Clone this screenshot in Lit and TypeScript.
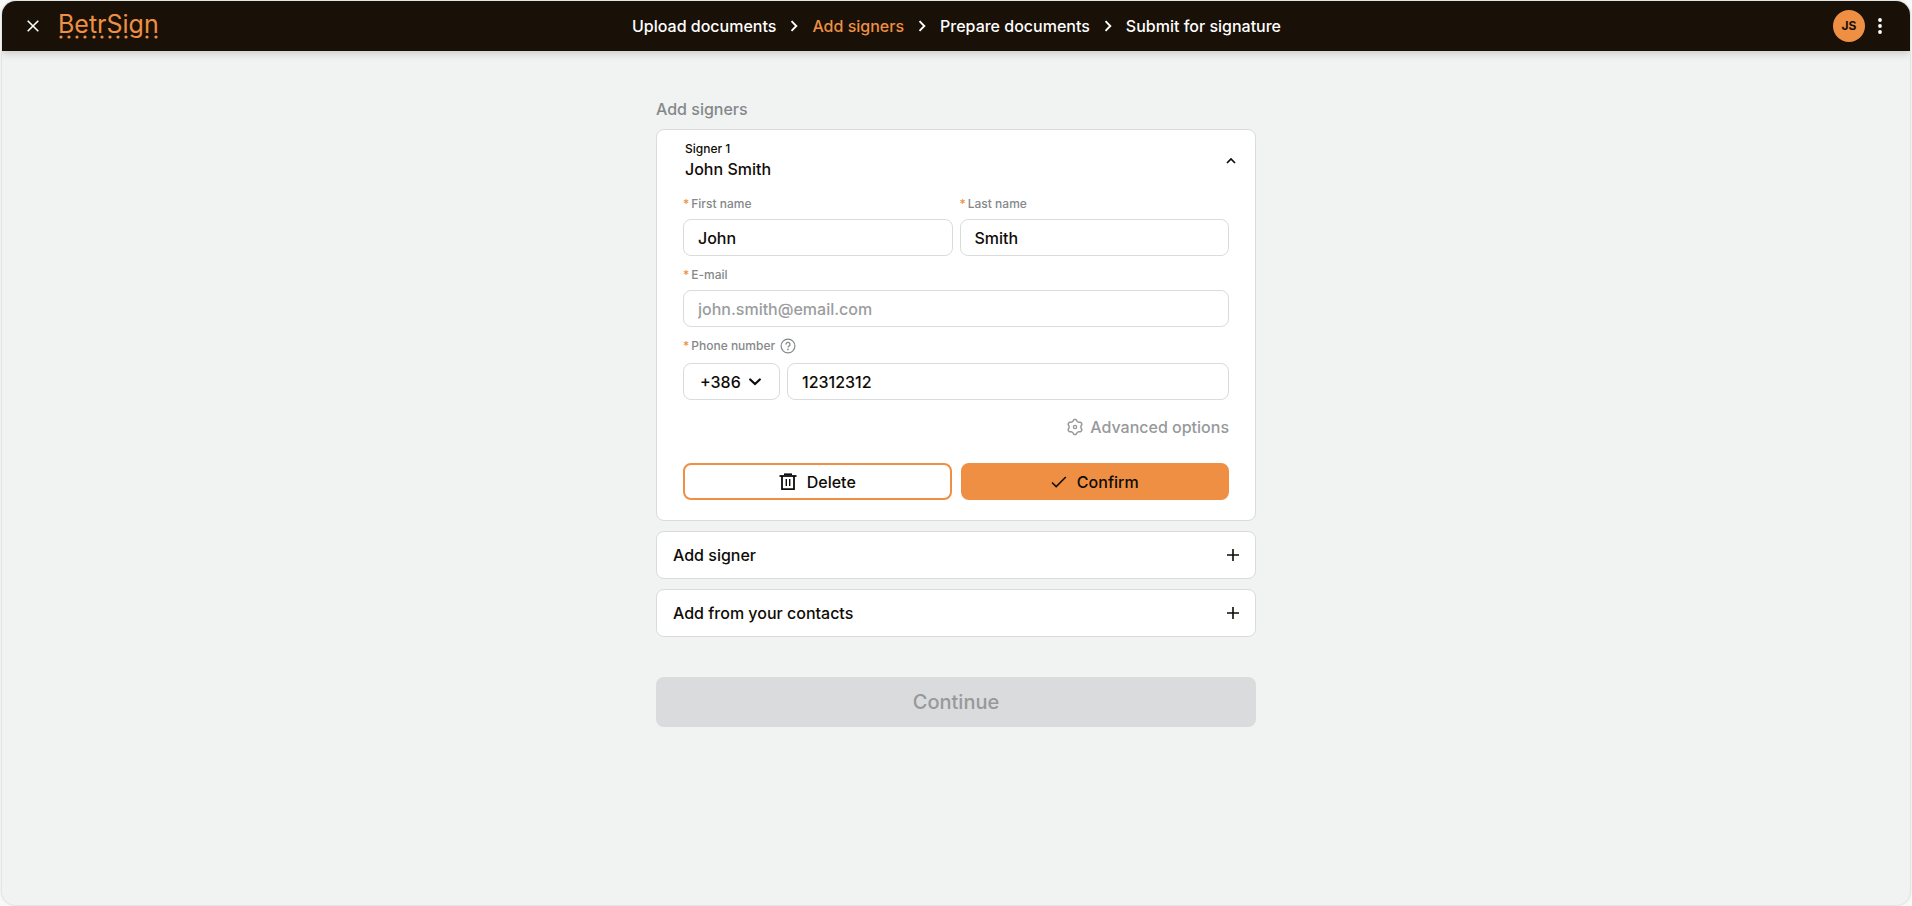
import { LitElement, html, css, svg } from "lit";
import { customElement, state } from "lit/decorators.js";

const chevronRight = html`<svg class="sep" width="8" height="12" viewBox="0 0 8 12" aria-hidden="true">
  <path d="M1.5 1.2 6.3 6 1.5 10.8" fill="none" stroke="currentColor" stroke-width="1.9" />
</svg>`;

const plus = html`<svg width="12" height="12" viewBox="0 0 12 12" aria-hidden="true">
  <path d="M6 0v12M0 6h12" fill="none" stroke="currentColor" stroke-width="1.6" />
</svg>`;

const gearPath = (() => {
  const points: string[] = [];
  for (let i = 0; i <= 72; i++) {
    const a = (i / 72) * Math.PI * 2;
    const wave = Math.cos(6 * a);
    const r = 6.7 + 0.8 * Math.tanh(2 * wave);
    points.push(`${(8 + r * Math.sin(a)).toFixed(2)} ${(8 - r * Math.cos(a)).toFixed(2)}`);
  }
  return `M${points.join("L")}Z`;
})();

const logoDots = [3, 11, 19, 27, 36, 44, 52, 60, 68, 89, 98];

@customElement("app-root")
export class AppRoot extends LitElement {
  @state() private steps = ["Upload documents", "Add signers", "Prepare documents", "Submit for signature"];
  @state() private current = 1;

  static styles = css`
    :host {
      display: block;
      box-sizing: border-box;
      min-height: 100vh;
      padding: 1px 2px;
      background: #f7f8f8;
      color: #0f0b06;
      font: 500 16px/20px Inter, "Liberation Sans", sans-serif;
      --orange: #ee8f44;
      --line: #d9dbdc;
      --muted: #85888a;
    }
    * {
      box-sizing: border-box;
    }
    button,
    input,
    select {
      font: inherit;
      color: inherit;
      margin: 0;
    }
    button {
      cursor: pointer;
    }
    svg {
      display: block;
      flex: none;
    }
    .frame {
      display: flex;
      flex-direction: column;
      min-height: calc(100vh - 2px);
      border-radius: 14px;
      overflow: hidden;
      background: #f0f3f2;
      box-shadow: 0 0 2px 1px #dcdfdf;
    }
    .bar {
      display: grid;
      grid-template-columns: 1fr auto 1fr;
      align-items: center;
      height: 50px;
      padding: 0 23px 0 24px;
      background: #191007;
      color: #fff;
      box-shadow: 0 2px 8px #0000002e;
    }
    .brand,
    .account {
      display: flex;
      align-items: center;
    }
    .brand {
      gap: 18px;
    }
    .account {
      justify-content: flex-end;
      gap: 8px;
    }
    .icon-button {
      display: grid;
      place-items: center;
      padding: 0;
      border: 0;
      background: none;
    }
    .logo {
      display: flex;
      flex-direction: column;
      color: var(--orange);
      text-decoration: none;
      font: 400 25px/22px Inter, sans-serif;
    }
    .steps {
      display: flex;
      align-items: center;
      gap: 14px;
      margin: 0;
      padding: 0;
      list-style: none;
    }
    .step {
      display: flex;
      align-items: center;
      gap: 14px;
    }
    .step-link {
      color: inherit;
      text-decoration: none;
    }
    .step-link.current {
      color: var(--orange);
    }
    .avatar {
      width: 32px;
      height: 32px;
      border-radius: 50%;
      background: var(--orange);
      color: #191007;
      font-size: 12px;
      font-weight: 700;
    }
    .content {
      width: 100%;
      max-width: 600px;
      margin: 0 auto;
      padding: 48px 0;
    }
    .title {
      margin: 0 0 10px;
      color: var(--muted);
      font-size: 16px;
      font-weight: 500;
      line-height: 20px;
    }
    .card {
      padding: 9px 26px 20px;
      border: 1px solid var(--line);
      border-radius: 8px;
      background: #fff;
    }
    .signer {
      display: flex;
      align-items: center;
      justify-content: space-between;
      width: 100%;
      padding: 0 0 0 2px;
      border: 0;
      background: none;
      text-align: left;
    }
    .signer-text {
      display: flex;
      flex-direction: column;
    }
    .toggle {
      margin-right: -7px;
    }
    .small {
      font-size: 12px;
    }
    .form {
      display: grid;
      grid-template-columns: 1fr 1fr;
      gap: 9px 7px;
      margin-top: 15px;
    }
    .wide {
      grid-column: 1 / -1;
    }
    .label {
      display: flex;
      align-items: center;
      gap: 2px;
      height: 20px;
      margin-bottom: 5px;
      color: var(--muted);
      font-size: 12px;
    }
    .star {
      color: var(--orange);
    }
    .help {
      margin-left: 3px;
      color: inherit;
    }
    .box {
      width: 100%;
      height: 37px;
      padding: 0 14px;
      border: 1px solid var(--line);
      border-radius: 8px;
      background: #fff;
      outline: none;
    }
    .box:focus-visible {
      border-color: var(--orange);
    }
    .box::placeholder {
      color: #9a9d9e;
      opacity: 1;
    }
    .phone {
      display: grid;
      grid-template-columns: 97px 1fr;
      gap: 7px;
      margin-top: 7px;
    }
    .picker {
      display: grid;
      align-items: center;
    }
    .picker > * {
      grid-area: 1 / 1;
    }
    .picker .box {
      appearance: none;
      padding: 0 16px;
    }
    .picker svg {
      justify-self: end;
      margin-right: 19px;
      pointer-events: none;
    }
    .advanced {
      display: flex;
      align-items: center;
      gap: 7px;
      margin: 17px 0 26px auto;
      padding: 0;
      border: 0;
      background: none;
      color: #97999b;
    }
    .actions {
      display: grid;
      grid-template-columns: 1fr 1fr;
      gap: 9px;
    }
    .action {
      display: flex;
      align-items: center;
      justify-content: center;
      gap: 10px;
      height: 37px;
      border: 2px solid var(--orange);
      border-radius: 8px;
      background: #fff;
    }
    .action.primary {
      background: var(--orange);
    }
    .add {
      display: flex;
      align-items: center;
      justify-content: space-between;
      width: 100%;
      height: 48px;
      margin-top: 10px;
      padding: 0 16px;
      border: 1px solid var(--line);
      border-radius: 8px;
      background: #fff;
    }
    .continue {
      width: 100%;
      height: 50px;
      margin-top: 40px;
      border: 0;
      border-radius: 8px;
      background: #d9dbdc;
      color: #97999b;
      font-size: 20px;
      cursor: default;
    }
  `;

  private renderHeader() {
    return html`<header class="bar">
      <div class="brand">
        <button class="icon-button" aria-label="Close">
          <svg width="14" height="14" viewBox="0 0 14 14" aria-hidden="true">
            <path d="M1.7 1.7 12.3 12.3M12.3 1.7 1.7 12.3" fill="none" stroke="currentColor" stroke-width="1.6" />
          </svg>
        </button>
        <a class="logo" href="#">
          BetrSign
          <svg width="101" height="4" viewBox="0 0 101 4" aria-hidden="true">
            ${logoDots.map((x) => svg`<circle cx=${x} cy="2" r="1.6" fill="currentColor" />`)}
          </svg>
        </a>
      </div>
      <nav aria-label="Progress">
        <ol class="steps">
          ${this.steps.map(
            (name, i) => html`<li class="step">
              ${i ? chevronRight : ""}
              <a class="step-link ${i === this.current ? "current" : ""}" href="#">${name}</a>
            </li>`
          )}
        </ol>
      </nav>
      <div class="account">
        <button class="icon-button avatar" aria-label="Account">JS</button>
        <button class="icon-button" aria-label="More">
          <svg width="14" height="18" viewBox="0 0 14 18" aria-hidden="true">
            <g fill="currentColor">
              <circle cx="7" cy="3" r="1.9" />
              <circle cx="7" cy="9" r="1.9" />
              <circle cx="7" cy="15" r="1.9" />
            </g>
          </svg>
        </button>
      </div>
    </header>`;
  }

  private label(target: string, text: string) {
    return html`<span class="star">*</span><label for=${target}>${text}</label>`;
  }

  private renderCard() {
    return html`<section class="card">
      <button class="signer" aria-expanded="true">
        <span class="signer-text"><span class="small">Signer 1</span><span>John Smith</span></span>
        <svg class="toggle" width="10" height="12" viewBox="0 0 10 12" aria-hidden="true">
          <path d="M1 10 5 6 9 10" fill="none" stroke="currentColor" stroke-width="1.7" />
        </svg>
      </button>
      <div class="form">
        <div>
          <div class="label">${this.label("first", "First name")}</div>
          <input class="box" id="first" value="John" />
        </div>
        <div>
          <div class="label">${this.label("last", "Last name")}</div>
          <input class="box" id="last" value="Smith" />
        </div>
        <div class="wide">
          <div class="label">${this.label("email", "E-mail")}</div>
          <input class="box" id="email" type="email" placeholder="john.smith@email.com" />
        </div>
        <div class="wide">
          <div class="label">
            ${this.label("phone", "Phone number")}
            <button class="icon-button help" aria-label="Help with the phone number">
              <svg width="16" height="16" viewBox="0 0 16 16" aria-hidden="true">
                <g fill="none" stroke="currentColor">
                  <circle cx="8" cy="8" r="6.9" stroke-width="1.2" />
                  <path d="M6 6.6A2 2 0 1 1 8.9 8.2C8.2 8.6 8 8.8 8 9.6" stroke-width="1.3" />
                </g>
                <circle cx="8" cy="11.4" r=".85" fill="currentColor" />
              </svg>
            </button>
          </div>
          <div class="phone">
            <div class="picker">
              <select class="box" aria-label="Country code">
                <option>+386</option>
              </select>
              <svg width="12" height="8" viewBox="0 0 12 8" aria-hidden="true">
                <path d="M1.2 1.5 6 6.1 10.8 1.5" fill="none" stroke="currentColor" stroke-width="2.2" stroke-linecap="round" />
              </svg>
            </div>
            <input class="box" id="phone" type="tel" value="12312312" />
          </div>
        </div>
      </div>
      <button class="advanced">
        <svg width="16" height="18" viewBox="0 -1 16 18" aria-hidden="true">
          <path d=${gearPath} fill="none" stroke="currentColor" stroke-width="1.5" stroke-linejoin="round" />
          <circle cx="8" cy="8" r="1.6" fill="none" stroke="currentColor" stroke-width="1.4" />
        </svg>
        Advanced options
      </button>
      <div class="actions">
        <button class="action">
          <svg width="18" height="18" viewBox="0 0 18 18" aria-hidden="true">
            <g fill="none" stroke="currentColor">
              <path d="M.5 3H17.5" stroke-width="1.8" />
              <path d="M5 1.2H13" stroke-width="1.6" />
              <path d="M3 3V16.2H15V3" stroke-width="1.8" />
              <path d="M7.3 6V13M10.7 6V13" stroke-width="1.4" />
            </g>
          </svg>
          Delete
        </button>
        <button class="action primary">
          <svg width="16" height="12" viewBox="0 0 16 12" aria-hidden="true">
            <path d="M1 6.5 5.2 10.6 14.8 1" fill="none" stroke="currentColor" stroke-width="1.5" />
          </svg>
          Confirm
        </button>
      </div>
    </section>`;
  }

  render() {
    return html`<div class="frame">
      ${this.renderHeader()}
      <main class="content">
        <h1 class="title">Add signers</h1>
        ${this.renderCard()}
        <button class="add">Add signer ${plus}</button>
        <button class="add">Add from your contacts ${plus}</button>
        <button class="continue" disabled>Continue</button>
      </main>
    </div>`;
  }
}
